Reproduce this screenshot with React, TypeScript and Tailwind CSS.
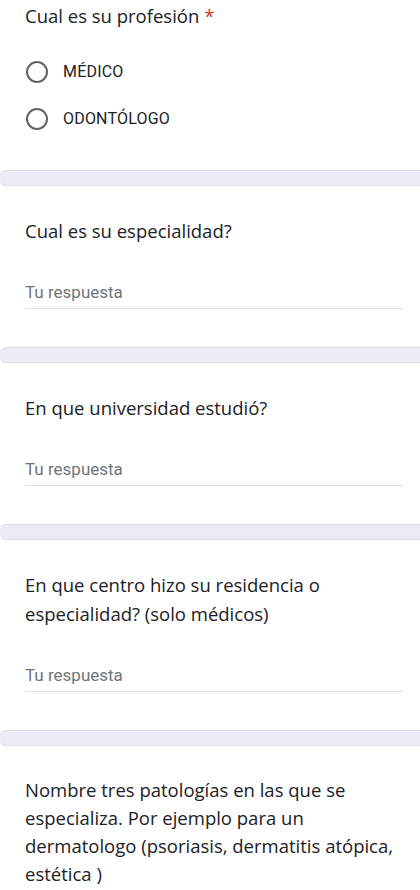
const titleFont = { fontFamily: '"Open Sans", Roboto, sans-serif' };

const Band = () => (
  <div className="h-[16px] bg-[#ecebf6] border-y border-[#dcdbe6] rounded-l-[6px]"></div>
);

const Radio = ({ label }: { label: string }) => (
  <div className="flex items-center h-[24px]">
    <div className="w-[22px] h-[22px] ml-[1px] rounded-full border-2 border-[#5f6368]"></div>
    <span className="ml-[15px] text-[16px] text-[#202124] tracking-[0.2px] font-['Roboto',sans-serif]">
      {label}
    </span>
  </div>
);

const TextQuestion = ({ title }: { title: React.ReactNode }) => (
  <div className="bg-white pt-[30px] pb-[38px] px-[25px]">
    <div className="text-[18.5px] leading-[29px] text-[#202124]" style={titleFont}>
      {title}
    </div>
    <div className="mt-[36px]">
      <div className="text-[17px] leading-[22px] text-[#70757a] font-['Roboto',sans-serif] pb-[5px]">
        Tu respuesta
      </div>
      <div className="h-px bg-[#e0e0e0] mr-[-8px]"></div>
    </div>
  </div>
);

export default function App() {
  return (
    <div className="w-[420px] h-[890px] overflow-hidden bg-white">
      <div className="-mt-[29px]">
        <div className="bg-white pt-[30px] pb-[39px] px-[25px]">
          <div className="text-[18.5px] leading-[29px] text-[#202124]" style={titleFont}>
            Cual es su profesión <span className="text-[#d93025]">*</span>
          </div>
          <div className="mt-[30px] flex flex-col gap-[23px]">
            <Radio label="MÉDICO" />
            <Radio label="ODONTÓLOGO" />
          </div>
        </div>
        <Band />
        <TextQuestion title="Cual es su especialidad?" />
        <Band />
        <TextQuestion title="En que universidad estudió?" />
        <Band />
        <TextQuestion title="En que centro hizo su residencia o especialidad? (solo médicos)" />
        <Band />
        <div className="bg-white pt-[30px] px-[25px]">
          <div className="text-[18.5px] leading-[28px] text-[#202124]" style={titleFont}>
            Nombre tres patologías en las que se especializa. Por ejemplo para un dermatologo (psoriasis, dermatitis atópica, estética )
          </div>
        </div>
      </div>
    </div>
  );
}
